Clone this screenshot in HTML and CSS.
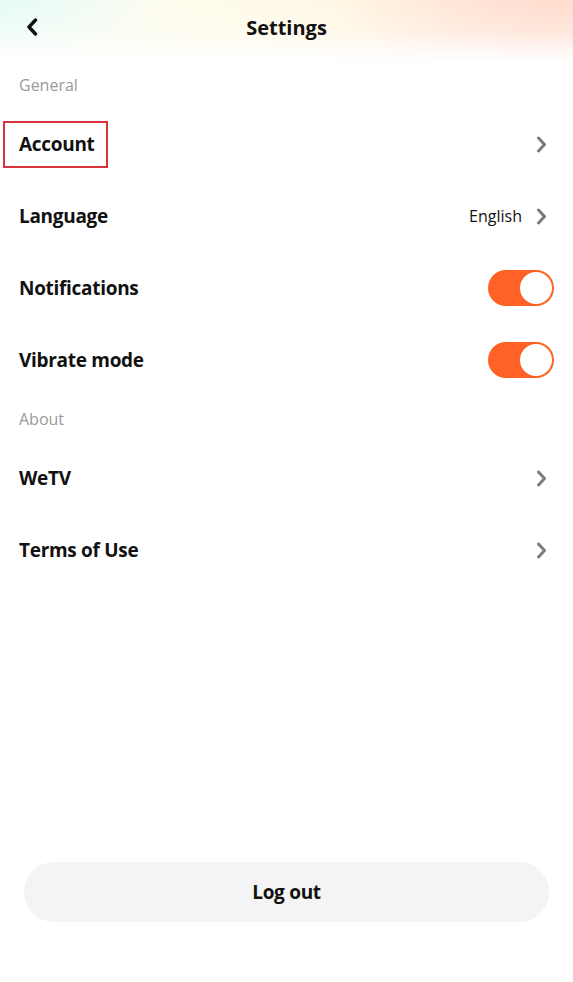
FILE: index.html
```html
<!DOCTYPE html>
<html lang="en">
<head>
    <meta charset="UTF-8">
    <meta name="viewport" content="width=device-width, initial-scale=1.0">
    <title>Settings</title>
    <link rel="stylesheet" href="styles.css">
</head>
<body>
    <div class="page">
        <header class="topbar">
            <button class="back" aria-label="Back">
                <svg width="12" height="18" viewBox="0 0 12 18"><path d="M9.5 2 L3 9 L9.5 16" fill="none" stroke="#111" stroke-width="3.4" stroke-linecap="round" stroke-linejoin="round"/></svg>
            </button>
            <h1>Settings</h1>
        </header>

        <div class="section-title">General</div>
        <div class="row">
            <span class="label boxed">Account</span>
            <span class="right"><svg class="chev" width="11" height="17" viewBox="0 0 11 17"><path d="M2.5 2 L8.5 8.5 L2.5 15" fill="none" stroke="#7c7c7c" stroke-width="3" stroke-linecap="round" stroke-linejoin="round"/></svg></span>
        </div>
        <div class="row">
            <span class="label">Language</span>
            <span class="right"><span class="value">English</span><svg class="chev" width="11" height="17" viewBox="0 0 11 17"><path d="M2.5 2 L8.5 8.5 L2.5 15" fill="none" stroke="#7c7c7c" stroke-width="3" stroke-linecap="round" stroke-linejoin="round"/></svg></span>
        </div>
        <div class="row">
            <span class="label">Notifications</span>
            <span class="toggle on"><span class="knob"></span></span>
        </div>
        <div class="row">
            <span class="label">Vibrate mode</span>
            <span class="toggle on"><span class="knob"></span></span>
        </div>

        <div class="section-title">About</div>
        <div class="row">
            <span class="label">WeTV</span>
            <span class="right"><svg class="chev" width="11" height="17" viewBox="0 0 11 17"><path d="M2.5 2 L8.5 8.5 L2.5 15" fill="none" stroke="#7c7c7c" stroke-width="3" stroke-linecap="round" stroke-linejoin="round"/></svg></span>
        </div>
        <div class="row">
            <span class="label">Terms of Use</span>
            <span class="right"><svg class="chev" width="11" height="17" viewBox="0 0 11 17"><path d="M2.5 2 L8.5 8.5 L2.5 15" fill="none" stroke="#7c7c7c" stroke-width="3" stroke-linecap="round" stroke-linejoin="round"/></svg></span>
        </div>

        <div class="spacer"></div>
        <div class="footer">
            <button class="logout">Log out</button>
        </div>
    </div>
</body>
</html>
```

FILE: styles.css
```css
html, body {
    margin: 0;
    padding: 0;
    background: #fff;
}
body {
    font-family: "Open Sans", "Noto Sans", Arial, sans-serif;
    color: #111;
}
.page {
    width: 573px;
    height: 982px;
    display: flex;
    flex-direction: column;
    overflow: hidden;
}
.topbar {
    height: 62px;
    flex-shrink: 0;
    display: flex;
    align-items: center;
    justify-content: center;
    position: relative;
    padding-bottom: 8px;
    box-sizing: border-box;
    background:
        linear-gradient(to bottom, rgba(255,255,255,0) 0%, rgba(255,255,255,0.2) 50%, #fff 100%),
        radial-gradient(ellipse 160px 70px at 0% 0%, #e6fbf6 0%, rgba(230,251,246,0) 100%),
        radial-gradient(ellipse 240px 100px at 100% 0%, #ffdccd 0%, rgba(255,220,205,0) 100%),
        linear-gradient(to right, #f8fdf6 0%, #fffcec 35%, #fff6e4 65%, #ffeadf 100%);
}
.topbar h1 {
    margin: 0;
    font-size: 20px;
    font-weight: 700;
    letter-spacing: 0;
}
.back {
    position: absolute;
    left: 26px;
    top: 18px;
    border: none;
    background: none;
    padding: 0;
    cursor: pointer;
}
.section-title {
    height: 46px;
    padding: 12px 19px 0;
    box-sizing: border-box;
    font-size: 16px;
    color: #9a9a9a;
}
.row {
    height: 72px;
    display: flex;
    align-items: center;
    justify-content: space-between;
    padding: 0 19px;
    box-sizing: border-box;
}
.label {
    font-size: 19px;
    font-weight: 700;
    letter-spacing: -0.3px;
}
.label.boxed {
    outline: 2px solid #d8333a;
    outline-offset: 0;
    padding: 8px 11px 9px 14px;
    margin-left: -14px;
}
.right {
    display: flex;
    align-items: center;
    gap: 13px;
    padding-right: 7px;
}
.value {
    font-size: 16px;
    color: #111;
    margin-right: 1px;
}
.chev {
    display: block;
}
.toggle {
    width: 66px;
    height: 36px;
    border-radius: 18px;
    background: #ff6126;
    position: relative;
    flex-shrink: 0;
}
.toggle .knob {
    position: absolute;
    right: 2px;
    top: 2px;
    width: 32px;
    height: 32px;
    border-radius: 50%;
    background: #fff;
}
.spacer {
    flex: 1;
}
.footer {
    padding: 0 24px 60px;
}
.logout {
    width: 100%;
    height: 60px;
    border: none;
    border-radius: 30px;
    background: #f4f4f4;
    font-family: inherit;
    font-size: 19px;
    font-weight: 700;
    color: #111;
    letter-spacing: -0.3px;
}
```
